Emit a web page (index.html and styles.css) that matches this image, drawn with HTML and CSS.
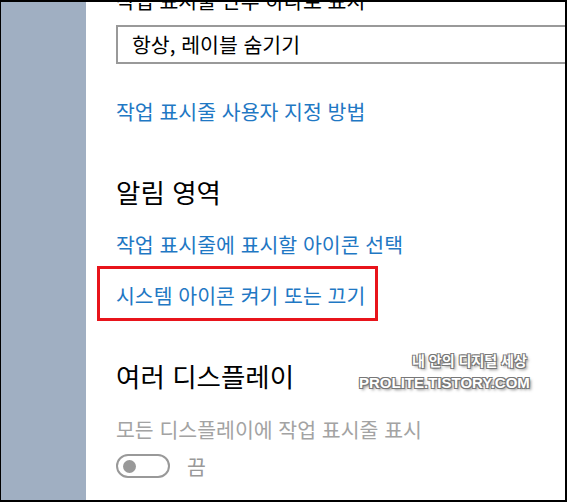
FILE: index.html
```html
<!DOCTYPE html>
<html lang="ko">
<head>
  <meta charset="utf-8">
  <title>작업 표시줄 설정</title>
  <link rel="stylesheet" href="styles.css">
</head>
<body>

  <div class="frame">
    <div class="sidebar"></div>

    <div class="content">
      <div class="cut-label">작업 표시줄 단추 하나로 표시</div>

      <div class="dropdown">항상, 레이블 숨기기</div>

      <a class="link first-link" href="#">작업 표시줄 사용자 지정 방법</a>

      <h2 class="heading notify">알림 영역</h2>
      <a class="link" href="#">작업 표시줄에 표시할 아이콘 선택</a>

      <div class="marked">
        <a class="link" href="#">시스템 아이콘 켜기 또는 끄기</a>
      </div>

      <h2 class="heading multi">여러 디스플레이</h2>
      <div class="label disabled">모든 디스플레이에 작업 표시줄 표시</div>

      <div class="toggle-row">
        <span class="toggle"><span class="knob"></span></span>
        <span class="toggle-text">끔</span>
      </div>

      <div class="watermark">
        <div class="wm-top">내 안의 디지털 세상</div>
        <div class="wm-bottom">PROLITE.TISTORY.COM</div>
      </div>
    </div>
  </div>

</body>
</html>
```

FILE: styles.css
```css
body {
  margin: 0;
  padding: 0;
  font-family: "Noto Sans CJK KR", "Noto Sans", sans-serif;
  background: #fff;
}
.frame {
  display: flex;
  width: 567px;
  height: 502px;
  box-sizing: border-box;
  border-top: 2px solid #000;
  border-left: 1px solid #000;
  border-right: 2px solid #000;
  border-bottom: 2px solid #000;
  overflow: hidden;
}
.sidebar {
  width: 85px;
  flex-shrink: 0;
  background: #a0afc2;
}
.content {
  position: relative;
  flex: 1;
  padding-left: 30px;
  overflow: hidden;
  background: #fff;
}
.cut-label {
  margin-top: -15px;
  height: 26px;
  line-height: 26px;
  font-size: 20.5px;
  color: #000;
  white-space: nowrap;
}
.dropdown {
  margin-top: 12px;
  width: 500px;
  height: 39px;
  box-sizing: border-box;
  border: 2px solid #999;
  padding-left: 14px;
  line-height: 35px;
  font-size: 20.5px;
  color: #000;
  white-space: nowrap;
}
.link {
  display: block;
  height: 26px;
  line-height: 26px;
  font-size: 20.5px;
  color: #1f78c4;
  text-decoration: none;
  white-space: nowrap;
}
.first-link {
  margin-top: 34px;
}
.heading {
  margin: 0;
  height: 34px;
  line-height: 34px;
  font-size: 26.5px;
  font-weight: normal;
  color: #000;
  margin-bottom: 22px;
}
.notify {
  margin-top: 51px;
}
.multi {
  margin-top: 38px;
  margin-bottom: 23px;
}
.marked {
  margin-top: 9px;
  margin-left: -19px;
  width: 281px;
  height: 55px;
  box-sizing: border-box;
  border: 3px solid #e8141b;
  padding: 13px 0 0 16px;
}
.label {
  height: 26px;
  line-height: 26px;
  font-size: 20.5px;
  white-space: nowrap;
}
.disabled {
  color: #a3a3a3;
}
.toggle-row {
  margin-top: 12px;
  display: flex;
  align-items: center;
  gap: 17px;
}
.toggle {
  width: 54px;
  height: 24px;
  box-sizing: border-box;
  border: 2px solid #999;
  border-radius: 12px;
  display: flex;
  align-items: center;
  padding-left: 5px;
}
.knob {
  width: 13px;
  height: 13px;
  border-radius: 50%;
  background: #999;
}
.toggle-text {
  font-size: 20.5px;
  line-height: 24px;
  color: #999;
}
.watermark {
  position: absolute;
  left: 273px;
  top: 348px;
  color: #fff;
  font-weight: bold;
  text-shadow: 1px 1px 0 #777, -1px -1px 0 #777, 1px -1px 0 #777, -1px 1px 0 #777, 2px 2px 3px rgba(0,0,0,0.5);
  text-align: right;
  white-space: nowrap;
}
.wm-top {
  font-size: 14px;
  line-height: 20px;
  padding-right: 3px;
}
.wm-bottom {
  margin-top: 4px;
  font-family: "Liberation Sans", sans-serif;
  font-size: 15px;
  line-height: 18px;
  letter-spacing: 0;
}
```
